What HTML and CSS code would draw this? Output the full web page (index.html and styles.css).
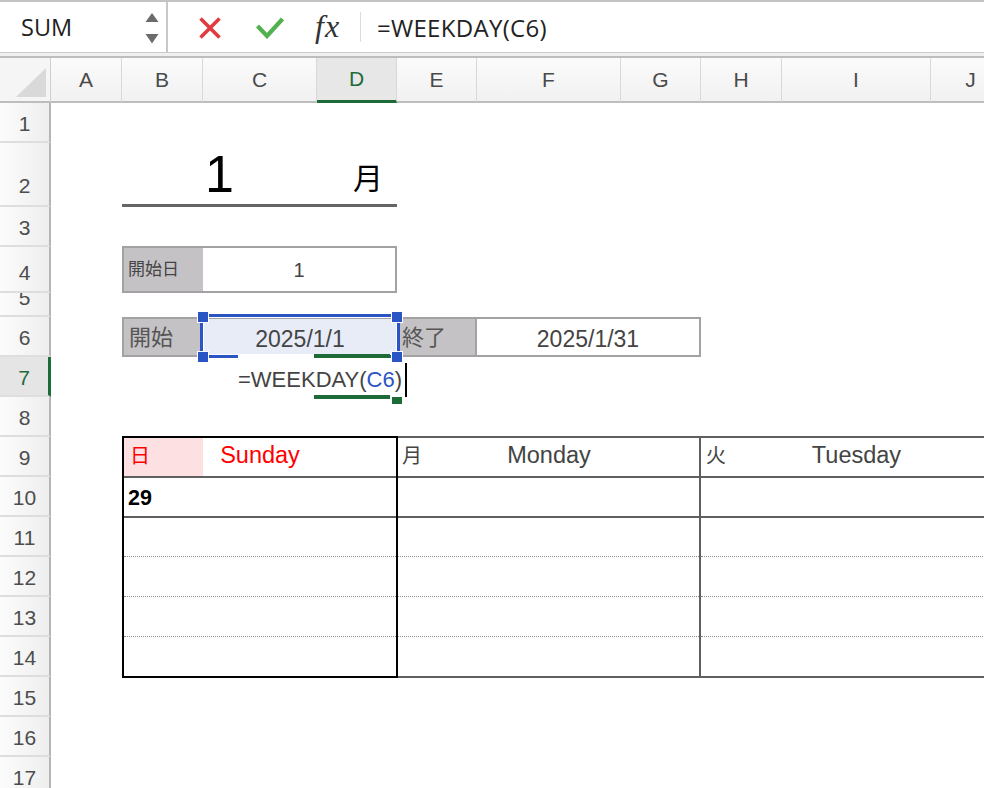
FILE: index.html
```html
<!DOCTYPE html>
<html lang="ja">
<head>
<meta charset="utf-8">
<link rel="stylesheet" href="styles.css">
</head>
<body>
<div class="fbar">
  <div class="namebox">
    <span class="nb-text">SUM</span>
    <span class="spin"><svg width="14" height="31" viewBox="0 0 14 31"><path d="M7 0 L13.5 9 L0.5 9 Z" fill="#6b6b6b"/><path d="M0.5 21 L13.5 21 L7 30.5 Z" fill="#6b6b6b"/></svg></span>
  </div>
  <div class="fx-area">
    <span class="ico cancel"><svg width="24" height="22" viewBox="0 0 24 22"><path d="M2.5 1.5 L21.5 20.5 M21.5 1.5 L2.5 20.5" stroke="#e03c40" stroke-width="3.6" fill="none"/></svg></span>
    <span class="ico enter"><svg width="28" height="22" viewBox="0 0 28 22"><path d="M1.5 9 L11 19 L26.5 2" fill="none" stroke="#52b04f" stroke-width="4.2"/></svg></span>
    <span class="fx">fx</span>
    <span class="vsep"></span>
    <span class="ftext">=WEEKDAY(C6)</span>
  </div>
</div>
<div class="fbar-sep"></div>
<div class="colheads">
  <div class="corner"><svg width="50" height="43" viewBox="0 0 50 43"><polygon points="46,10 46,39 16,39" fill="#d9d9d9"/></svg></div>
  <div class="colh wA">A</div>
  <div class="colh wB">B</div>
  <div class="colh wC">C</div>
  <div class="colh wD active">D</div>
  <div class="colh wE">E</div>
  <div class="colh wF">F</div>
  <div class="colh wG">G</div>
  <div class="colh wH">H</div>
  <div class="colh wI">I</div>
  <div class="colh wJ">J</div>
</div>
<div class="body">
  <div class="rowheads">
    <div class="rh">1</div>
    <div class="rh h64">2</div>
    <div class="rh">3</div>
    <div class="rh h46">4</div>
    <div class="rh h24">5</div>
    <div class="rh">6</div>
    <div class="rh active">7</div>
    <div class="rh">8</div>
    <div class="rh">9</div>
    <div class="rh">10</div>
    <div class="rh">11</div>
    <div class="rh">12</div>
    <div class="rh">13</div>
    <div class="rh">14</div>
    <div class="rh">15</div>
    <div class="rh">16</div>
    <div class="rh">17</div>
  </div>
  <div class="cells">
    <div class="title">
      <div class="t-num">1</div>
      <div class="t-month">月</div>
    </div>

    <div class="startday">
      <div class="lbl small">開始日</div>
      <div class="val">1</div>
    </div>

    <div class="period">
      <div class="lbl">開始</div>
      <div class="selcell">2025/1/1
        <span class="frame"></span>
        <span class="gap"></span>
        <span class="gmark"></span>
        <span class="hd tl"></span>
        <span class="hd tr"></span>
        <span class="hd bl"></span>
        <span class="hd br"></span>
      </div>
      <div class="lbl end">終了</div>
      <div class="val endval">2025/1/31</div>
    </div>

    <div class="f7">=WEEKDAY(<span class="ref">C6</span>)<span class="caret"></span></div>

    <div class="week sun">
      <div class="wr wh">
        <div class="dn">日</div>
        <div class="en">Sunday</div>
      </div>
      <div class="wr wd"><span class="num">29</span></div>
      <div class="wr dot"></div>
      <div class="wr dot"></div>
      <div class="wr dot"></div>
      <div class="wr last"></div>
    </div>

    <div class="week mon">
      <div class="wr wh">
        <div class="dn">月</div>
        <div class="en">Monday</div>
      </div>
      <div class="wr wd"></div>
      <div class="wr dot"></div>
      <div class="wr dot"></div>
      <div class="wr dot"></div>
      <div class="wr last"></div>
    </div>

    <div class="week tue">
      <div class="wr wh">
        <div class="dn">火</div>
        <div class="en">Tuesday</div>
      </div>
      <div class="wr wd"></div>
      <div class="wr dot"></div>
      <div class="wr dot"></div>
      <div class="wr dot"></div>
      <div class="wr last"></div>
    </div>

    <span class="gmark2"></span>
    <span class="fillhd"></span>
  </div>
</div>
</body>
</html>
```

FILE: styles.css
```css
html, body {
  margin: 0;
  padding: 0;
}
body {
  width: 984px;
  height: 788px;
  overflow: hidden;
  background: #fff;
  font-family: "Liberation Sans", "Noto Sans CJK JP", sans-serif;
}

/* ---------- formula bar ---------- */
.fbar {
  height: 52px;
  box-sizing: border-box;
  border-top: 2px solid #c3c3c3;
  display: flex;
  background: #fff;
}
.namebox {
  width: 168px;
  flex: none;
  box-sizing: border-box;
  border-right: 2px solid #c8c8c8;
  display: flex;
  align-items: center;
  padding: 0 7px 0 21px;
}
.nb-text {
  flex: 1;
  font-family: "Open Sans", sans-serif;
  font-size: 23.5px;
  color: #222;
}
.spin svg { display: block; margin-top: 2px; }
.fx-area {
  flex: 1;
  display: flex;
  align-items: center;
  padding-left: 30px;
  background: #fff;
}
.ico svg { display: block; }
.cancel { margin-right: 34px; margin-top: 2px; }
.enter { margin-right: 31px; margin-top: 2px; }
.fx {
  font-family: "Liberation Serif", serif;
  font-style: italic;
  font-size: 32px;
  letter-spacing: 1px;
  line-height: 1;
  color: #333;
  width: 30px;
  margin-right: 15px;
  margin-top: -2px;
}
.vsep {
  width: 1px;
  height: 30px;
  background: #dcdcdc;
  margin-right: 16px;
}
.ftext {
  font-family: "Open Sans", sans-serif;
  font-size: 24px;
  letter-spacing: 0.3px;
  color: #222;
}
.fbar-sep {
  height: 6px;
  box-sizing: border-box;
  border-top: 1px solid #cacaca;
  border-bottom: 2px solid #bdbdbd;
  background: #efefef;
}

/* ---------- column headers ---------- */
.colheads {
  display: flex;
  height: 45px;
}
.corner {
  width: 51px;
  flex: none;
  box-sizing: border-box;
  border-right: 1px solid #cfcfcf;
  border-bottom: 2px solid #bdbdbd;
  background: #f5f5f5;
}
.corner svg { display: block; }
.colh {
  flex: none;
  box-sizing: border-box;
  border-right: 1px solid #d8d8d8;
  border-bottom: 2px solid #bdbdbd;
  background: linear-gradient(#fbfbfb, #f1f1f1);
  display: flex;
  align-items: center;
  justify-content: center;
  font-size: 21px;
  color: #4a4a4a;
}
.colh.active {
  background: #e7e7e7;
  color: #1e6b3a;
  border-bottom: 3px solid #1e6b3a;
}
.wA { width: 71px; }
.wB { width: 81px; }
.wC { width: 114px; }
.wD { width: 80px; }
.wE { width: 80px; }
.wF { width: 144px; }
.wG { width: 80px; }
.wH { width: 81px; }
.wI { width: 149px; }
.wJ { width: 80px; }

/* ---------- row headers ---------- */
.body {
  display: flex;
}
.rowheads {
  width: 51px;
  flex: none;
}
.rh {
  box-sizing: border-box;
  height: 40px;
  border-right: 2px solid #b5b5b5;
  border-bottom: 2px solid #dedede;
  background: linear-gradient(to right, #fcfcfc, #eeeeee);
  display: flex;
  align-items: flex-end;
  justify-content: center;
  padding-bottom: 5px;
  font-size: 21px;
  line-height: 24px;
  color: #4d4d4d;
  overflow: hidden;
}
.rh.h64 { height: 64px; padding-bottom: 7px; }
.rh.h46 { height: 46px; padding-bottom: 6px; }
.rh.h24 { height: 24px; }
.rh.active {
  background: #e5e5e5;
  color: #1e6b3a;
  border-right: 3px solid #1e6b3a;
}

/* ---------- cells ---------- */
.cells {
  flex: none;
  position: relative;
  display: grid;
  grid-template-columns: 71px 81px 114px 80px 80px 144px 80px 81px 149px 80px;
  grid-template-rows: 40px 64px 40px 46px 24px 40px 40px 40px repeat(9, 40px);
}

.title {
  grid-row: 2;
  grid-column: 2 / 5;
  display: grid;
  grid-template-columns: 195px 1fr;
  align-items: end;
  box-sizing: border-box;
  border-bottom: 3px solid #656565;
}
.t-num {
  text-align: center;
  font-family: "Liberation Sans", sans-serif;
  font-size: 52px;
  line-height: 1;
  color: #000;
  padding-bottom: 4px;
}
.t-month {
  text-align: right;
  padding-right: 14px;
  font-family: "Noto Sans CJK JP", sans-serif;
  font-size: 30px;
  line-height: 1;
  color: #000;
  padding-bottom: 13px;
}

.lbl {
  background: #c4c2c4;
  color: #555;
  font-size: 22px;
  display: flex;
  align-items: center;
  padding-left: 5px;
  box-sizing: border-box;
  line-height: 1;
  padding-top: 2px;
}
.val {
  flex: 1;
  display: flex;
  align-items: center;
  justify-content: center;
  color: #444;
  line-height: 1;
}

.startday {
  grid-row: 4;
  grid-column: 2 / 5;
  box-sizing: border-box;
  margin-top: -1px;
  border: 2px solid #a3a1a3;
  display: flex;
}
.startday .lbl {
  width: 79px;
  font-size: 17px;
  color: #444;
  padding-left: 4px;
  padding-top: 0;
}
.startday .val {
  font-size: 20px;
}

.period {
  grid-row: 6;
  grid-column: 2 / 8;
  box-sizing: border-box;
  border: 2px solid #a3a1a3;
  display: flex;
}
.period .lbl { width: 79px; flex: none; }
.period .lbl.end { width: 78px; }
.period .endval {
  border-left: 2px solid #a3a1a3;
  font-size: 23px;
  padding-top: 4px;
}
.selcell {
  position: relative;
  width: 194px;
  flex: none;
  background: #e8ecf7;
  display: flex;
  align-items: center;
  justify-content: center;
  font-size: 23px;
  line-height: 1;
  color: #444;
  padding-top: 4px;
  box-sizing: border-box;
}
.frame {
  position: absolute;
  left: -3px;
  top: -5px;
  right: -3px;
  bottom: -3px;
  border: 3px solid #2b55c4;
  box-shadow: inset 0 0 0 1px #fff;
}
.gap {
  position: absolute;
  left: 35px;
  top: 36px;
  width: 76px;
  height: 3px;
  background: #fff;
}
.gmark {
  position: absolute;
  left: 111px;
  top: 35px;
  width: 76px;
  height: 4px;
  background: #1e6b3a;
}
.hd {
  position: absolute;
  width: 10px;
  height: 10px;
  background: #2b55c4;
  box-shadow: 0 0 0 1px #fff;
}
.hd.tl { left: -5px; top: -7px; }
.hd.tr { left: 189px; top: -7px; }
.hd.bl { left: -5px; top: 33px; }
.hd.br { left: 189px; top: 33px; }

.f7 {
  grid-row: 7;
  grid-column: 3 / 7;
  display: flex;
  align-items: center;
  padding-left: 35px;
  padding-top: 6px;
  font-size: 22px;
  color: #444;
  white-space: nowrap;
}
.ref { color: #2b55c4; }
.caret {
  display: inline-block;
  width: 2px;
  height: 34px;
  background: #000;
  margin-left: 3px;
}
.gmark2 {
  position: absolute;
  left: 263px;
  top: 292px;
  width: 76px;
  height: 4px;
  background: #1e6b3a;
}
.fillhd {
  position: absolute;
  left: 341px;
  top: 294px;
  width: 10px;
  height: 7px;
  background: #1e6b3a;
  box-shadow: 0 0 0 1px #fff;
}

/* ---------- calendar ---------- */
.week {
  grid-row: 9 / 15;
  margin-top: -1px;
  margin-bottom: -1px;
  display: flex;
  flex-direction: column;
  border-top: 2px solid #5f5f5f;
  border-bottom: 2px solid #5f5f5f;
}
.week.sun {
  grid-column: 2 / 5;
  border: 2px solid #000;
  margin-right: -1px;
  position: relative;
  z-index: 1;
}
.week.mon {
  grid-column: 5 / 8;
  border-right: 2px solid #5f5f5f;
}
.week.tue {
  grid-column: 8 / 11;
}
.wr {
  flex: none;
  box-sizing: border-box;
  height: 40px;
}
.wr.wh,
.wr.wd {
  border-bottom: 2px solid #5f5f5f;
}
.wr.dot {
  height: 40px;
  border-bottom: 1px dotted #8c8c8c;
}
.wd + .dot { height: 39px; }
.wr.last { height: 39px; }
.wh {
  display: flex;
}
.dn {
  flex: none;
  display: flex;
  align-items: center;
  padding-left: 5px;
  padding-bottom: 4px;
  box-sizing: border-box;
  font-family: "Noto Sans CJK JP", sans-serif;
  font-size: 20px;
  line-height: 1;
  color: #444;
}
.en {
  flex: none;
  display: flex;
  align-items: center;
  justify-content: center;
  padding-bottom: 4px;
  box-sizing: border-box;
  font-size: 23.5px;
  color: #444;
}
.sun .dn { width: 79px; background: #fde0e2; color: #f00; padding-left: 6px; }
.sun .en { width: 114px; color: #f00; }
.mon .dn { width: 80px; }
.mon .en { width: 144px; }
.tue .dn { width: 81px; }
.tue .en { width: 149px; }
.wd {
  display: flex;
  align-items: center;
  padding-left: 4px;
  padding-top: 3px;
}
.num {
  font-weight: bold;
  font-size: 21.5px;
  color: #000;
}
```
